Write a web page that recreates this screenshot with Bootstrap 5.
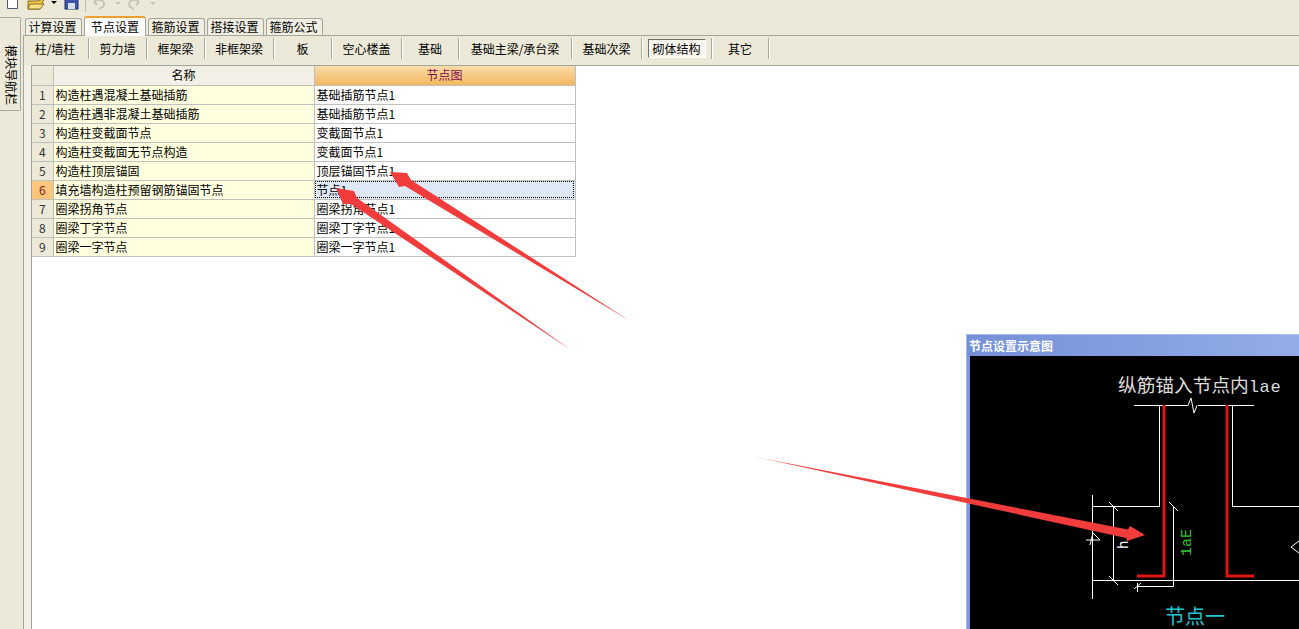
<!DOCTYPE html>
<html lang="zh">
<head>
    <meta charset="UTF-8">
    <meta name="viewport" content="width=device-width, initial-scale=1.0">
    <title>节点设置</title>
    <link href="https://cdn.jsdelivr.net/npm/bootstrap@5.3.0/dist/css/bootstrap.min.css" rel="stylesheet">
    <style>
        html, body { height: 100%; overflow: hidden; }
        body { background: #ece9d8; color: #000; font: 12px/1 "Noto Sans CJK SC", "Liberation Sans", sans-serif; }
        .app-shell { width: 1299px; height: 629px; position: relative; overflow: hidden; }
        .tool-strip { height: 17px; overflow: hidden; }
        .tool-strip svg { display: block; }
        .side-col { width: 23px; flex: none; }
        .side-tab { width: 21px; height: 94px; background: #ece9d8; border: 1px solid #aca899; border-left: 0; border-radius: 0 2px 2px 0; writing-mode: vertical-rl; text-orientation: sideways; font-size: 12px; padding-top: 27px; padding-right: 3px; }
        .main-col { width: 1276px; }
        .tab-row { height: 18px; padding-left: 2px; gap: 2px; }
        .set-tab { width: 57px; height: 17px; margin-top: 1px; padding: 2px 2px 0 0; text-align: center; background: #f1efe3; border: 1px solid #a5a59a; border-bottom: 0; border-radius: 3px 3px 0 0; position: relative; }
        .set-tab.on { width: 62px; height: 20px; margin-top: -1px; padding: 3px 0 0; background: #fff; border-color: #a5a59a; border-top: 2px solid #f0a030; z-index: 2; }
        .set-panel { border-left: 1px solid #a5a59a; border-top: 1px solid #a5a59a; height: 594px; background: #f2f0e6; padding-left: 7px; }
        .sub-row { height: 29px; margin-left: -7px; background: #ece9d8; }
        .sub-item { min-width: 58px; height: 21px; margin-top: 2px; border-right: 1px solid #aca899; box-shadow: 1px 0 0 #fff; display: flex; align-items: center; justify-content: center; white-space: nowrap; }
        .sub-item.first { min-width: 65px; padding-right: 2px; }
        .sub-item.mid { min-width: 69px; }
        .sub-item.wide { min-width: 70px; }
        .sub-item.short { min-width: 57px; }
        .sub-item.wider { min-width: 113px; }
        .sub-pick { display: block; width: 58px; height: 19px; line-height: 17px; text-align: center; background: #f7f6ee; border: 1px solid #fff; border-top-color: #6f6f68; border-left-color: #6f6f68; }
        .sheet { background: #fff; border-left: 1px solid #a5a59a; border-top: 1px solid #a5a59a; height: 564px; }
        .grid-table { width: 543px; table-layout: fixed; margin: 0; border-collapse: collapse; font-size: 12px; }
        .grid-table td, .grid-table th { height: 19px; padding: 0 0 1px 2px; line-height: 17px; border: 1px solid #c0c0bc; border-top: 0; border-left: 0; font-weight: 400; vertical-align: middle; white-space: nowrap; overflow: hidden; background: #fff; box-shadow: none; color: #000; }
        .grid-table .num { width: 21px; background: #ece9d8; text-align: center; padding: 0 0 1px; color: #333; }
        .grid-table .num.now { background: #f9c77c; color: #8a1c1c; }
        .grid-table .head { background: #f1efe6; text-align: center; padding: 0 0 1px; }
        .grid-table .head.now { background: linear-gradient(#fbdca8, #f3b75f); color: #7c0a4a; }
        .grid-table .label { background: #ffffe0; }
        .grid-table .pick { background: #dfe8f6; outline: 1px dotted #000; outline-offset: -2px; }
        .pop-win { position: absolute; left: 966px; top: 334px; width: 340px; height: 300px; background: #7b98de; border-top: 1px solid #a7bcec; border-left: 1px solid #a7bcec; z-index: 3; }
        .pop-title { height: 21px; padding: 5px 0 0 2px; background: linear-gradient(90deg, #7590d8, #93aee8); color: #fff; font-weight: 700; }
        .pop-body { background: #000; margin-left: 3px; display: block; }
        .mark-layer { position: absolute; left: 0; top: 0; z-index: 5; pointer-events: none; }
    </style>
</head>
<body>
    <div class="app-shell">
        <!-- top toolbar, icons are cut off by the window edge -->
        <div class="tool-strip">
            <svg width="170" height="17" viewBox="0 0 170 17">
                <path d="M7.5 -4H17.5V8.5H7.5Z" fill="#fff" stroke="#4a5a78"/>
                <path d="M28 1H37L44 -1L40 9H28Z" fill="#f3c84e" stroke="#8a6a1c"/>
                <path d="M30 4H44L40 9H28Z" fill="#fbe08a" stroke="#8a6a1c"/>
                <path d="M51 1H57L54 4Z" fill="#000"/>
                <rect x="65" y="-4" width="13" height="13" fill="#3a57a8" stroke="#1f2f70"/>
                <rect x="68" y="3" width="7" height="6" fill="#d8dfee"/>
                <rect x="85" y="-2" width="1" height="14" fill="#bdbaa8"/>
                <path d="M94 2L97 5M94 2C98 -2 104 0 104 4C104 6 102 8 99 9" fill="none" stroke="#c8c5b5" stroke-width="2"/>
                <path d="M115 2H121L118 5Z" fill="#c8c5b5"/>
                <path d="M139 2L136 5M139 2C135 -2 129 0 129 4C129 6 131 8 134 9" fill="none" stroke="#c8c5b5" stroke-width="2"/>
                <path d="M150 2H156L153 5Z" fill="#c8c5b5"/>
            </svg>
        </div>
        <div class="d-flex">
            <div class="side-col">
                <div class="side-tab">模块导航栏</div>
            </div>
            <div class="main-col">
                <div class="tab-row d-flex">
                    <div class="set-tab">计算设置</div>
                    <div class="set-tab on">节点设置</div>
                    <div class="set-tab">箍筋设置</div>
                    <div class="set-tab">搭接设置</div>
                    <div class="set-tab">箍筋公式</div>
                </div>
                <div class="set-panel">
                    <div class="sub-row d-flex align-items-start">
                        <div class="sub-item first">柱/墙柱</div>
                        <div class="sub-item">剪力墙</div>
                        <div class="sub-item">框架梁</div>
                        <div class="sub-item mid">非框架梁</div>
                        <div class="sub-item">板</div>
                        <div class="sub-item wide">空心楼盖</div>
                        <div class="sub-item short">基础</div>
                        <div class="sub-item wider">基础主梁/承台梁</div>
                        <div class="sub-item wide">基础次梁</div>
                        <div class="sub-item wide"><span class="sub-pick">砌体结构</span></div>
                        <div class="sub-item short">其它</div>
                    </div>
                    <div class="sheet">
                        <table class="table grid-table">
                            <colgroup><col style="width:21px"><col style="width:261px"><col style="width:261px"></colgroup>
                            <tbody>
                                <tr><th class="num"></th><th class="head">名称</th><th class="head now">节点图</th></tr>
                                <tr><td class="num">1</td><td class="label">构造柱遇混凝土基础插筋</td><td>基础插筋节点1</td></tr>
                                <tr><td class="num">2</td><td class="label">构造柱遇非混凝土基础插筋</td><td>基础插筋节点1</td></tr>
                                <tr><td class="num">3</td><td class="label">构造柱变截面节点</td><td>变截面节点1</td></tr>
                                <tr><td class="num">4</td><td class="label">构造柱变截面无节点构造</td><td>变截面节点1</td></tr>
                                <tr><td class="num">5</td><td class="label">构造柱顶层锚固</td><td>顶层锚固节点1</td></tr>
                                <tr><td class="num now">6</td><td class="label">填充墙构造柱预留钢筋锚固节点</td><td class="pick">节点1</td></tr>
                                <tr><td class="num">7</td><td class="label">圈梁拐角节点</td><td>圈梁拐角节点1</td></tr>
                                <tr><td class="num">8</td><td class="label">圈梁丁字节点</td><td>圈梁丁字节点1</td></tr>
                                <tr><td class="num">9</td><td class="label">圈梁一字节点</td><td>圈梁一字节点1</td></tr>
                            </tbody>
                        </table>
                    </div>
                </div>
            </div>
        </div>

        <!-- floating preview window -->
        <div class="pop-win">
            <div class="pop-title">节点设置示意图</div>
            <svg class="pop-body" width="337" height="278" viewBox="970 357 337 278">
                <text x="1118" y="393" font-family="'Noto Sans CJK SC', sans-serif" font-size="18.7" fill="#dcdcdc">纵筋锚入节点内<tspan font-family="'Liberation Mono', monospace" font-size="17" letter-spacing="0.6">lae</tspan></text>
                <g fill="none" stroke="#fff">
                    <path d="M1134 406.5H1188M1198 406.5H1254"/>
                    <path d="M1188 406.5L1191 399L1194 414L1197 406.5"/>
                    <path d="M1159.5 406V507.5H1092M1232.5 406V507.5H1299"/>
                    <path d="M1092 581.5H1299M1092.5 496V600"/>
                    <path d="M1113.5 507V581M1109 503L1118 512M1109 577L1118 586"/>
                    <path d="M1173.5 507V587.5H1137M1169 503L1178 512M1137.5 584V593M1134 590L1141 584"/>
                    <path d="M1086 541H1100L1093 534L1090 546"/>
                    <path d="M1299 542L1291 548L1299 554"/>
                </g>
                <g fill="none" stroke="#e01414" stroke-width="3">
                    <path d="M1164 406V577H1137"/>
                    <path d="M1227 406V577H1254"/>
                </g>
                <text transform="translate(1128 550) rotate(-90)" font-family="'Liberation Mono', monospace" font-size="14" fill="#fff">h</text>
                <text transform="translate(1191 557) rotate(-90)" font-family="'Liberation Mono', monospace" font-size="15" fill="#34c834">1aE</text>
                <text x="1165" y="625" font-family="'Noto Sans CJK SC', sans-serif" font-size="20" fill="#25c4d2">节点一</text>
            </svg>
        </div>

        <!-- red arrows drawn on top of the screenshot -->
        <svg class="mark-layer" width="1299" height="629" viewBox="0 0 1299 629">
            <g fill="#f23c3c">
                <path d="M390 172L407 173L411 180L630 321L405 186L399 187Z"/>
                <path d="M336 188L354 191L357 198L571 350L351 204L343 204Z"/>
                <path d="M1145 535L1130 526L1128 529.5L756 457L1126 538L1127 541Z"/>
            </g>
        </svg>
    </div>
    <script src="https://cdn.jsdelivr.net/npm/bootstrap@5.3.0/dist/js/bootstrap.bundle.min.js"></script>
</body>
</html>
